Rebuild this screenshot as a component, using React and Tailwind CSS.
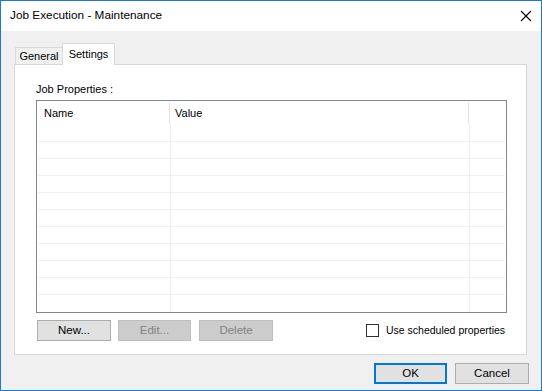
import React from "react";

const font = { fontFamily: '"Liberation Sans", Arial, sans-serif' };

function Btn({ children, disabled, primary, className = "" }) {
  let cls =
    "flex items-center justify-center shrink-0 h-[21px] text-[11.5px] leading-none ";
  if (primary) cls += "border-2 border-[#0078d7] bg-[#e1e1e1] text-black ";
  else if (disabled) cls += "border border-[#bfbfbf] bg-[#cccccc] text-[#838383] ";
  else cls += "border border-[#adadad] bg-[#e1e1e1] text-black ";
  return <div className={cls + className}>{children}</div>;
}

export default function App() {
  const rows = Array.from({ length: 10 });
  return (
    <div
      className="w-[542px] h-[391px] border border-[#1c7ad2] bg-[#f0f0f0] flex flex-col text-black"
      style={font}
    >
      {/* Title bar */}
      <div className="h-[30px] bg-white flex items-center justify-between pl-[9px] pr-[9px] shrink-0">
        <span className="text-[11.8px]">Job Execution - Maintenance</span>
        <svg width="12" height="12" viewBox="0 0 12 12">
          <path d="M1 1 L11 11 M11 1 L1 11" stroke="#000" strokeWidth="1.1" />
        </svg>
      </div>

      {/* Tabs */}
      <div className="flex items-end pl-[13px] mt-[12px] h-[21px] shrink-0 relative z-10">
        <div className="h-[17px] w-[48px] border border-b-0 border-[#d9d9d9] bg-[#f0f0f0] ml-[1px] flex items-center justify-center text-[11px]">
          General
        </div>
        <div className="h-[22px] w-[53px] border border-b-0 border-[#d9d9d9] bg-white flex items-center justify-center text-[11px] -mb-[1px] -ml-[1px] pb-[1px]">
          Settings
        </div>
      </div>

      {/* Panel */}
      <div className="ml-[13px] w-[513px] h-[291px] border border-[#d9d9d9] bg-white flex flex-col shrink-0 pl-[21px] pt-[19px]">
        <div className="text-[11px] leading-none h-[16px]">Job Properties :</div>
        <div className="w-[471px] h-[213px] border border-[#828790] bg-white flex flex-col">
          {/* header */}
          <div className="h-[24px] flex shrink-0">
            <div className="w-[133px] flex items-center pl-[7px] text-[11px] border-r border-[#e5e5e5] my-[1px]">
              Name
            </div>
            <div className="w-[299px] flex items-center pl-[5px] text-[11px] border-r border-[#e5e5e5] my-[1px]">
              Value
            </div>
            <div className="flex-1" />
          </div>
          {/* body rows */}
          <div className="flex-1 flex flex-col">
            {rows.map((_, i) => (
              <div key={i} className="h-[17px] flex border-b border-[#f0f0f0] mx-[1px] shrink-0">
                <div className="w-[133px] border-r border-[#f0f0f0]" />
                <div className="w-[299px] border-r border-[#f0f0f0]" />
                <div className="flex-1" />
              </div>
            ))}
            <div className="flex-1 flex mx-[1px]">
              <div className="w-[133px] border-r border-[#f0f0f0]" />
              <div className="w-[299px] border-r border-[#f0f0f0]" />
              <div className="flex-1" />
            </div>
          </div>
        </div>
        {/* buttons row */}
        <div className="flex items-center mt-[7px]">
          <Btn className="w-[74px] ml-[1px]">New...</Btn>
          <Btn disabled className="w-[73px] ml-[7px]">Edit...</Btn>
          <Btn disabled className="w-[74px] ml-[8px]">Delete</Btn>
          <div className="flex items-center ml-[93px] shrink-0">
            <div className="w-[13px] h-[13px] border border-[#333333] bg-white" />
            <span className="ml-[7px] text-[10.5px] whitespace-nowrap">Use scheduled properties</span>
          </div>
        </div>
      </div>

      {/* Bottom buttons */}
      <div className="flex mt-[8px] pl-[373px]">
        <Btn primary className="w-[73px]">OK</Btn>
        <Btn className="w-[74px] ml-[8px]">Cancel</Btn>
      </div>
    </div>
  );
}
